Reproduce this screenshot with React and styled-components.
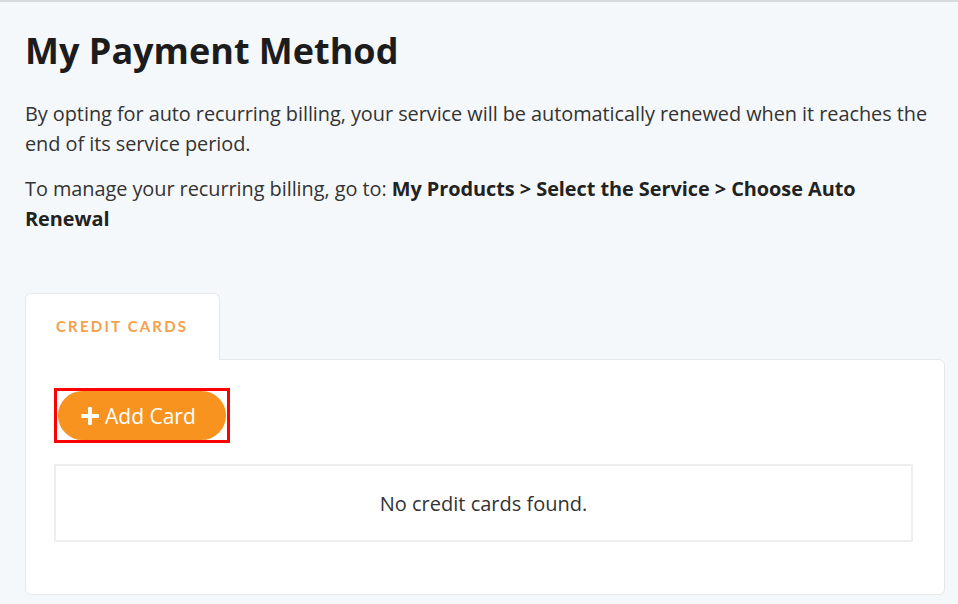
import React from "react";
import styled, { createGlobalStyle } from "styled-components";

const Global = createGlobalStyle`
  html, body { margin: 0; padding: 0; background: #f5f8fa; }
  body { font-family: "Open Sans", "Liberation Sans", sans-serif; color: #333; }
  * { box-sizing: border-box; }
`;

const Page = styled.div`
  min-height: 604px;
  border-top: 2px solid #d6dbe0;
  padding: 25px 13px 0 25px;
`;

const Title = styled.h1`
  margin: 0 0 24px;
  font-size: 36px;
  line-height: 48px;
  font-weight: 700;
  color: #1c1c1c;
`;

const Para = styled.p`
  margin: 0 0 15px;
  font-size: 19.9px;
  line-height: 30px;
  letter-spacing: -0.05px;
  color: #333;
`;

const Path = styled.span`
  font-weight: 700;
  color: #222;
`;

const Tabs = styled.div`
  margin-top: 59px;
  display: flex;
`;

const Tab = styled.div`
  width: 195px;
  height: 67px;
  background: #fff;
  border: 1px solid #e4e8ec;
  border-bottom: none;
  border-radius: 6px 6px 0 0;
  padding: 23px 0 0 30px;
  font-family: "Lato", "Open Sans", sans-serif;
  font-size: 15px;
  font-weight: 700;
  letter-spacing: 2.2px;
  color: #f5a04a;
  position: relative;
  z-index: 1;
  margin-bottom: -1px;
`;

const Panel = styled.div`
  background: #fff;
  border: 1px solid #e4e8ec;
  border-radius: 0 6px 6px 6px;
  padding: 28px 31px 52px 28px;
`;

const Focus = styled.div`
  display: inline-block;
  border: 3px solid #ff0000;
  padding: 0 1px;
  line-height: 0;
`;

const AddButton = styled.button`
  display: inline-flex;
  align-items: center;
  gap: 6px;
  height: 49px;
  width: 168px;
  padding: 0 0 0 23px;
  border: none;
  border-radius: 25px;
  background: #f7931e;
  color: #fff;
  font-family: "Open Sans", sans-serif;
  font-size: 21px;
  cursor: pointer;
  svg { flex: none; }
`;

const Empty = styled.div`
  margin-top: 21px;
  height: 78px;
  border: 2px solid #eeeeee;
  display: flex;
  align-items: center;
  justify-content: center;
  font-size: 20px;
  color: #333;
`;

export default function App() {
  return (
    <>
      <Global />
      <Page>
        <Title>My Payment Method</Title>
        <Para>
          By opting for auto recurring billing, your service will be automatically renewed when it
          reaches the end of its service period.
        </Para>
        <Para>
          To manage your recurring billing, go to:{" "}
          <Path>My Products &gt; Select the Service &gt; Choose Auto Renewal</Path>
        </Para>
        <Tabs>
          <Tab>CREDIT CARDS</Tab>
        </Tabs>
        <Panel>
          <Focus>
            <AddButton>
              <svg width="18" height="18" viewBox="0 0 18 18">
                <rect x="7" y="0" width="4" height="18" rx="1" fill="#fff" />
                <rect x="0" y="7" width="18" height="4" rx="1" fill="#fff" />
              </svg>
              Add Card
            </AddButton>
          </Focus>
          <Empty>No credit cards found.</Empty>
        </Panel>
      </Page>
    </>
  );
}
